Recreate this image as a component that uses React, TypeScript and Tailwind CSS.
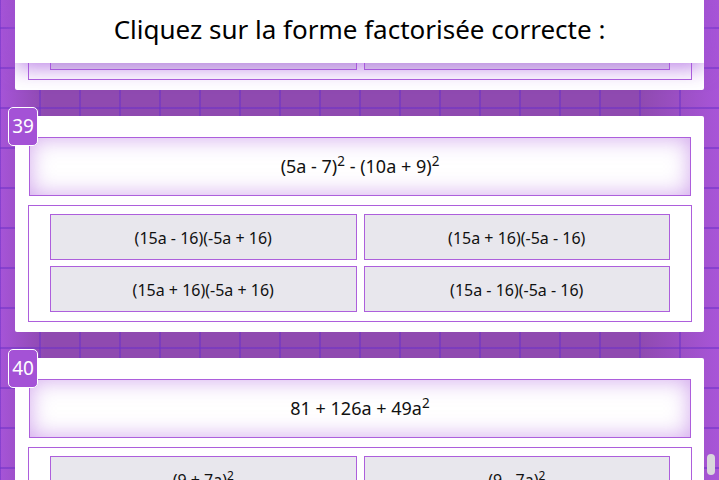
import React from 'react';

type Question = {
  num: number;
  expr: React.ReactNode;
  options: React.ReactNode[];
};

const Sq = () => <sup className="text-[0.75em] -top-[0.5em]">2</sup>;

const questions: Question[] = [
  {
    num: 38,
    expr: <>(3a + 4)<Sq /> - (6a - 2)<Sq /></>,
    options: [
      <>(9a + 2)(-3a + 6)</>,
      <>(9a - 2)(-3a - 6)</>,
      <>(9a + 2)(-3a - 6)</>,
      <>(9a - 2)(-3a + 6)</>,
    ],
  },
  {
    num: 39,
    expr: <>(5a - 7)<Sq /> - (10a + 9)<Sq /></>,
    options: [
      <>(15a - 16)(-5a + 16)</>,
      <>(15a + 16)(-5a - 16)</>,
      <>(15a + 16)(-5a + 16)</>,
      <>(15a - 16)(-5a - 16)</>,
    ],
  },
  {
    num: 40,
    expr: <>81 + 126a + 49a<Sq /></>,
    options: [
      <>(9 + 7a)<Sq /></>,
      <>(9 - 7a)<Sq /></>,
      <>(7a - 9)<Sq /></>,
      <>(9 + 7a)(9 - 7a)</>,
    ],
  },
];

const QuestionCard = ({ q }: { q: Question }) => (
  <div className="relative bg-white rounded-[2px] ml-[15px] w-[689px] pl-[14px] pr-[13px] pt-[21px] pb-[10px]">
    <div className="absolute -left-[7px] -top-[9px] w-[30px] h-[39px] rounded-[5px] border border-white bg-[#a452d6] text-white text-[19px] flex items-center justify-center">
      {q.num}
    </div>
    <div className="h-[59px] border border-[#ad5fdc] bg-white shadow-[inset_0_0_22px_rgba(170,90,220,0.55)] flex items-center justify-center text-[18px] text-[#111]">
      <span>{q.expr}</span>
    </div>
    <div className="mt-[9px] -ml-px mr-[-1px] border border-[#ad5fdc] px-[21px] pt-[8px] pb-[9px] grid grid-cols-2 gap-x-[7px] gap-y-[6px]">
      {q.options.map((o, i) => (
        <button
          key={i}
          className="h-[46px] bg-[#e8e7ed] border border-[#ad5fdc] flex items-center justify-center pt-[2px] text-[16px] text-[#111]"
        >
          <span>{o}</span>
        </button>
      ))}
    </div>
  </div>
);

export default function App() {
  return (
    <div
      className="relative w-[719px] h-[480px] overflow-hidden bg-[#8e4aae] bg-[linear-gradient(to_right,rgba(110,50,200,0.55)_2px,transparent_2px),linear-gradient(to_bottom,rgba(110,50,200,0.55)_2px,transparent_2px),linear-gradient(to_right,#a654d8_0px,#8f4ab0_45px,#8f4ab0_640px,#a855d8_719px)] bg-[size:40px_40px,40px_40px,100%_100%] bg-[position:-1px_27px,-1px_27px,0_0]"
      style={{ fontFamily: '"Noto Sans", "Open Sans", sans-serif' }}
    >
      <div className="-mt-[126px] flex flex-col gap-[26px]">
        {questions.map(q => (
          <QuestionCard key={q.num} q={q} />
        ))}
      </div>

      <div className="absolute left-[15px] top-0 w-[689px] h-[63px] pb-[4px] bg-white shadow-[0_4px_22px_rgba(160,80,220,0.75)] flex items-center justify-center text-[26px] text-black">
        Cliquez sur la forme factorisée correcte :
      </div>

      <div className="absolute right-[4px] top-[454px] w-[8px] h-[21px] rounded-full bg-[#d9d6dc]" />
    </div>
  );
}
